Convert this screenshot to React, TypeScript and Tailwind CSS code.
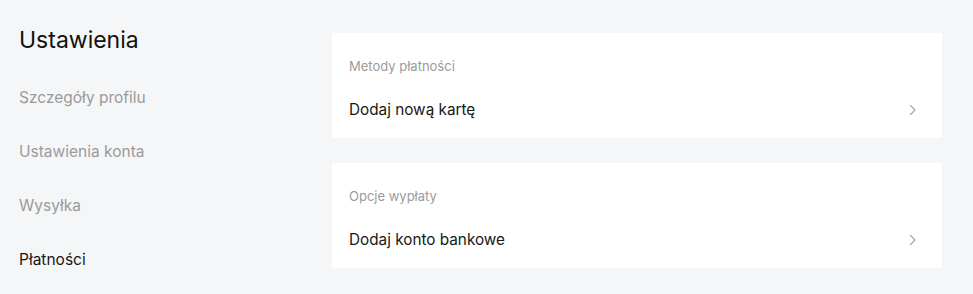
import React from "react";

const sideItems = [
  { label: "Szczegóły profilu", active: false },
  { label: "Ustawienia konta", active: false },
  { label: "Wysyłka", active: false },
  { label: "Płatności", active: true },
];

const sections = [
  { title: "Metody płatności", action: "Dodaj nową kartę" },
  { title: "Opcje wypłaty", action: "Dodaj konto bankowe" },
];

function Chevron() {
  return (
    <svg width="8" height="12" viewBox="0 0 8 12" fill="none" className="text-[#a9a9a9]">
      <path d="M1.5 1.5 6 6l-4.5 4.5" stroke="currentColor" strokeWidth="1.3" strokeLinecap="round" strokeLinejoin="round" />
    </svg>
  );
}

export default function App() {
  return (
    <div
      className="flex h-[294px] w-[973px] bg-[#f5f6f7] text-[#171717]"
      style={{ fontFamily: "Inter, 'Noto Sans', sans-serif" }}
    >
      <aside className="w-[332px] shrink-0 pl-[19px]">
        <h1 className="pt-[26px] text-[23px] leading-[28px] font-normal text-[#111]">Ustawienia</h1>
        <nav className="mt-[17px] flex flex-col">
          {sideItems.map((item) => (
            <div
              key={item.label}
              className={`flex h-[54px] items-center text-[15.5px] ${item.active ? "text-[#171717]" : "text-[#9a9a9a]"}`}
            >
              {item.label}
            </div>
          ))}
        </nav>
      </aside>

      <main className="flex w-[610px] flex-col gap-[25px] pt-[33px]">
        {sections.map((section) => (
          <section key={section.title} className="h-[105px] bg-white px-[17px]">
            <p className="pt-[23px] text-[13px] leading-[20px] text-[#9b9b9b]">{section.title}</p>
            <div className="mt-[10px] flex h-[48px] items-center justify-between pr-[8px]">
              <span className="text-[15.3px] text-[#171717]">{section.action}</span>
              <Chevron />
            </div>
          </section>
        ))}
      </main>
    </div>
  );
}
